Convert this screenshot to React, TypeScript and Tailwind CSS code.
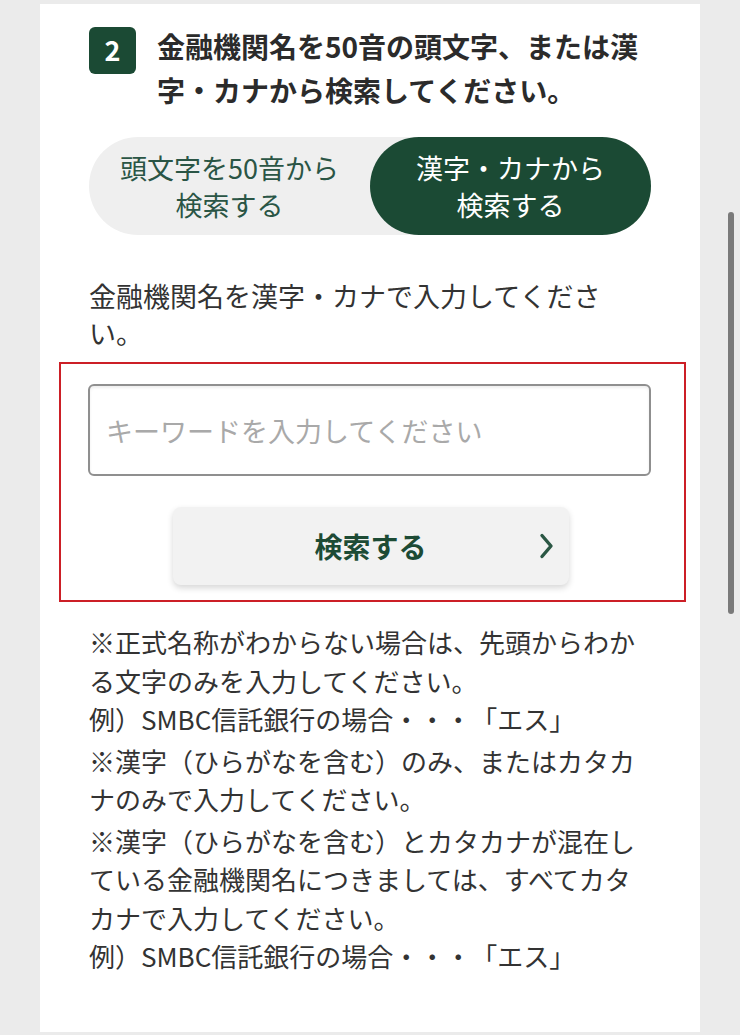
import { useState } from 'react'

const notes: string[][] = [
  ['※正式名称がわからない場合は、先頭からわかる文字のみを入力してください。', '例）SMBC信託銀行の場合・・・「エス」'],
  ['※漢字（ひらがなを含む）のみ、またはカタカナのみで入力してください。'],
  [
    '※漢字（ひらがなを含む）とカタカナが混在している金融機関名につきましては、すべてカタカナで入力してください。',
    '例）SMBC信託銀行の場合・・・「エス」',
  ],
]

function Chevron() {
  return (
    <svg width="15" height="27" viewBox="0 0 15 27" fill="none" aria-hidden>
      <polyline
        points="3,3 12,13.5 3,24"
        stroke="#2b5744"
        strokeWidth="3.4"
        strokeLinecap="round"
        strokeLinejoin="round"
      />
    </svg>
  )
}

export default function App() {
  const [mode, setMode] = useState<'kana' | 'kanji'>('kanji')
  const [keyword, setKeyword] = useState('')

  return (
    <div className="flex h-[1035px] w-[740px] flex-col bg-[#ebebeb] font-['Noto_Sans_CJK_JP','Noto_Sans',sans-serif] [text-spacing-trim:space-all]">
      <div className="h-[4px]" />
      <div className="flex flex-1">
        <div className="w-[40px]" />

        {/* card */}
        <div className="w-[660px] bg-white pl-[49px] pr-[49px] pt-[20px]">
          <div className="flex items-start gap-[21px]">
            <span className="mt-[3px] flex h-[47px] w-[47px] shrink-0 items-center justify-center rounded-[6px] bg-[#1b4a34] text-[27px] font-bold text-white">
              2
            </span>
            <h2 className="text-[28px] font-bold leading-[44px] text-[#2b2b2b]">
              金融機関名を50音の頭文字、または漢字・カナから検索してください。
            </h2>
          </div>

          <div className="mt-[25px] grid h-[98px] grid-cols-2 rounded-full bg-[#efefef]">
            <button
              type="button"
              onClick={() => setMode('kana')}
              className={
                mode === 'kana'
                  ? 'rounded-full bg-[#1b4a34] text-[27px] leading-[37px] text-white'
                  : 'rounded-full text-[27px] leading-[37px] text-[#2a5545]'
              }
            >
              頭文字を50音から
              <br />
              検索する
            </button>
            <button
              type="button"
              onClick={() => setMode('kanji')}
              className={
                mode === 'kanji'
                  ? 'rounded-full bg-[#1b4a34] text-[27px] leading-[37px] text-white'
                  : 'rounded-full text-[27px] leading-[37px] text-[#2a5545]'
              }
            >
              漢字・カナから
              <br />
              検索する
            </button>
          </div>

          <p className="mt-[42px] text-[27px] leading-[37px] text-[#333]">
            金融機関名を漢字・カナで入力してください。
          </p>

          {/* highlighted search area */}
          <div className="ml-[-30px] mr-[-35px] mt-[11px] border-2 border-[#cc1f26] pb-[15px] pl-[27px] pr-[33px] pt-[20px]">
            <input
              type="text"
              value={keyword}
              onChange={(e) => setKeyword(e.target.value)}
              placeholder="キーワードを入力してください"
              className="block h-[92px] w-full rounded-[6px] border-2 border-[#8f8f8f] px-[16px] text-[27px] text-[#333] shadow-[inset_0_2px_3px_rgba(0,0,0,0.07)] outline-none placeholder:text-[#a9a9a9]"
            />
            <div className="mt-[31px] flex justify-center pl-[2px]">
              <button
                type="button"
                className="relative flex h-[78px] w-[396px] items-center justify-center rounded-[8px] bg-[#f2f2f2] text-[28px] font-bold text-[#1d4b35] shadow-[0_3px_6px_rgba(0,0,0,0.16)]"
              >
                検索する
                <span className="absolute right-[15px] top-1/2 flex -translate-y-1/2">
                  <Chevron />
                </span>
              </button>
            </div>
          </div>

          <div className="mt-[21px] space-y-[3px] text-[26px] leading-[38.5px] text-[#333]">
            {notes.map((lines, i) => (
              <p key={i}>
                {lines.map((line, j) => (
                  <span key={j} className="block">
                    {line}
                  </span>
                ))}
              </p>
            ))}
          </div>
        </div>

        {/* scrollbar gutter */}
        <div className="flex w-[40px] pl-[28px] pt-[208px]">
          <div className="h-[402px] w-[6px] rounded-full bg-[#7a7a7a]" />
        </div>
      </div>
      <div className="h-[3px]" />
    </div>
  )
}
